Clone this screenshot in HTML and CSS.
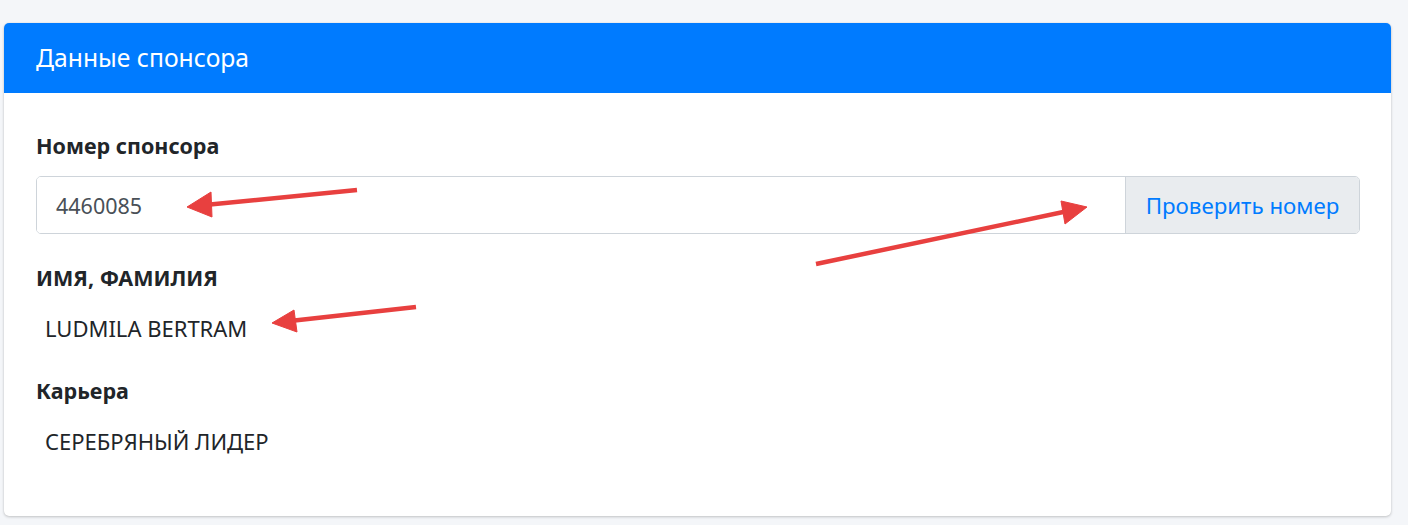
FILE: index.html
```html
<!DOCTYPE html>
<html lang="ru">
<head>
<meta charset="utf-8">
<link rel="stylesheet" href="styles.css">
</head>
<body>
<div class="page">
  <div class="card">
    <div class="card-header">
      <h3 class="card-title">Данные спонсора</h3>
    </div>
    <div class="card-body">
      <div class="label">Номер спонсора</div>
      <div class="input-group">
        <div class="input">4460085</div>
        <div class="btn">Проверить номер</div>
      </div>
      <div class="label label-2">ИМЯ, ФАМИЛИЯ</div>
      <div class="value">LUDMILA BERTRAM</div>
      <div class="label label-3">Карьера</div>
      <div class="value">СЕРЕБРЯНЫЙ ЛИДЕР</div>
    </div>
  </div>
</div>
<svg class="arrows" width="1408" height="525" viewBox="0 0 1408 525">
  <g fill="#e8403f" stroke="#e8403f">
    <line x1="357" y1="190" x2="205" y2="205" stroke-width="4.5"/>
    <polygon points="187,207 211,192 212,217" stroke-width="1" stroke-linejoin="round"/>
    <line x1="816" y1="264" x2="1068" y2="211" stroke-width="4.5"/>
    <polygon points="1087,207 1061,201 1065,224" stroke-width="1" stroke-linejoin="round"/>
    <line x1="416" y1="307" x2="290" y2="321" stroke-width="4.5"/>
    <polygon points="272,323 294,310 297,332" stroke-width="1" stroke-linejoin="round"/>
  </g>
</svg>
</body>
</html>
```
FILE: styles.css
```css
html, body {
  margin: 0;
  padding: 0;
}
body {
  background: #f4f6f9;
  font-family: "Noto Sans", "Open Sans", sans-serif;
  color: #212529;
  width: 1408px;
  height: 525px;
  overflow: hidden;
  position: relative;
}
.page {
  padding: 23px 17px 0 4px;
}
.card {
  background: #fff;
  border-radius: 5px;
  box-shadow: 0 0 1px rgba(0,0,0,.125), 0 1px 3px rgba(0,0,0,.2);
  overflow: hidden;
}
.card-header {
  background: #007bff;
  height: 70px;
  padding: 0 32px;
  display: flex;
  align-items: center;
}
.card-title {
  margin: 0;
  font-weight: 400;
  font-size: 24.7px;
  color: #fff;
  line-height: 30px;
}
.card-body {
  padding: 39px 31px 61px 32px;
}
.label {
  font-weight: 700;
  font-size: 21.5px;
  line-height: 28px;
  margin-bottom: 16px;
}
.label-2 {
  margin-top: 30px;
  margin-bottom: 22px;
}
.label-3 {
  margin-top: 35px;
  margin-bottom: 22px;
}
.input-group {
  display: flex;
  height: 58px;
  border: 1px solid #ced4da;
  border-radius: 5px;
  box-sizing: border-box;
  overflow: hidden;
}
.input {
  flex: 1;
  display: flex;
  align-items: center;
  padding: 0 19px;
  font-size: 21.5px;
  color: #495057;
  background: #fff;
}
.btn {
  width: 233px;
  border-left: 1px solid #ced4da;
  background: #e9ecef;
  color: #007bff;
  font-size: 22.3px;
  display: flex;
  align-items: center;
  justify-content: center;
}
.value {
  padding-left: 9px;
  font-size: 22px;
  line-height: 28px;
}
.arrows {
  position: absolute;
  left: 0;
  top: 0;
  pointer-events: none;
}
```
